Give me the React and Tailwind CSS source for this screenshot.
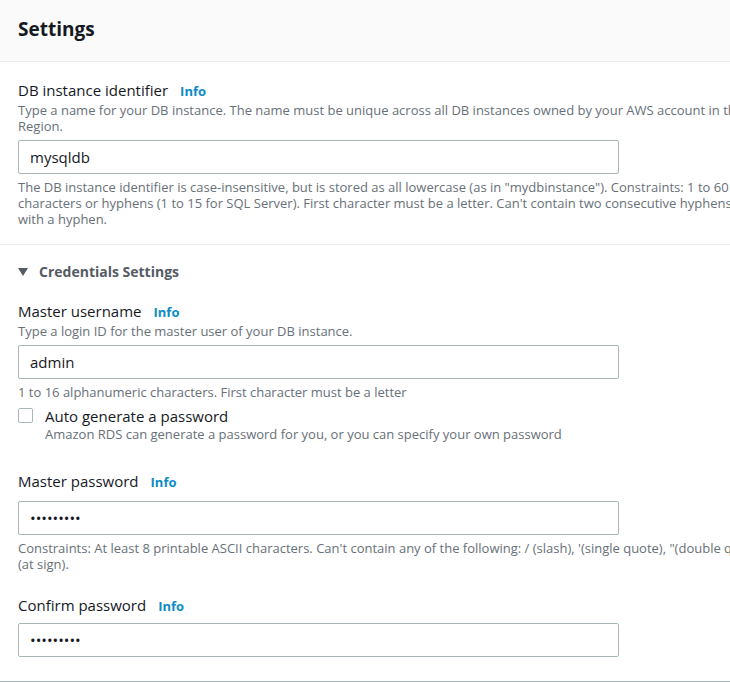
import { useState } from 'react'

const font = { fontFamily: '"Open Sans", "Liberation Sans", sans-serif' }

function Info() {
  return <span className="ml-3 text-[13px] font-bold text-[#0d8bc6]">Info</span>
}

function Label({ children }) {
  return (
    <div className="flex items-baseline text-[15px] leading-5 text-[#16191f]">
      {children}
      <Info />
    </div>
  )
}

function Hint({ lines, className = '' }) {
  return (
    <div className={`text-[13px] leading-4 text-[#687078] whitespace-nowrap ${className}`}>
      {lines.map((l) => (
        <div key={l}>{l}</div>
      ))}
    </div>
  )
}

function TextInput({ value, type = 'text' }) {
  const [v, setV] = useState(value)
  return (
    <input
      type={type}
      value={v}
      onChange={(e) => setV(e.target.value)}
      className="block w-[601px] h-[34px] rounded-[2px] border border-[#aab7b8] bg-white px-[11px] text-[15px] text-[#16191f] outline-none"
      style={font}
    />
  )
}

export default function App() {
  const [auto, setAuto] = useState(false)

  return (
    <div className="w-[730px] h-[682px] overflow-hidden bg-white" style={font}>
      <div className="w-[900px] border-b border-[#aab7b8]">
        {/* header */}
        <div className="h-[62px] bg-[#fafafa] border-b border-[#eaeded] px-[18px] flex items-center">
          <h2 className="text-[19px] font-bold text-[#16191f] pb-[3px]">Settings</h2>
        </div>

        {/* identifier */}
        <div className="px-[18px] pt-[18px] pb-[17px] border-b border-[#eaeded]">
          <Label>DB instance identifier</Label>
          <Hint
            className="mt-[1px]"
            lines={[
              'Type a name for your DB instance. The name must be unique across all DB instances owned by your AWS account in the current AWS',
              'Region.',
            ]}
          />
          <div className="mt-[6px]">
            <TextInput value="mysqldb" />
          </div>
          <Hint
            className="mt-[5px]"
            lines={[
              'The DB instance identifier is case-insensitive, but is stored as all lowercase (as in "mydbinstance"). Constraints: 1 to 60 alphanumeric',
              "characters or hyphens (1 to 15 for SQL Server). First character must be a letter. Can't contain two consecutive hyphens. Can't end",
              'with a hyphen.',
            ]}
          />
        </div>

        {/* credentials */}
        <div className="px-[18px] pt-[16px] pb-[24px]">
          <div className="flex items-center text-[14px] font-bold text-[#545b64]">
            <svg width="10" height="8" viewBox="0 0 10 8" className="mr-[11px]">
              <path d="M0 0h10L5 8z" fill="#545b64" />
            </svg>
            Credentials Settings
          </div>

          <div className="mt-[19px]">
            <Label>Master username</Label>
            <Hint className="mt-[1px]" lines={['Type a login ID for the master user of your DB instance.']} />
            <div className="mt-[6px]">
              <TextInput value="admin" />
            </div>
            <Hint className="mt-[5px]" lines={['1 to 16 alphanumeric characters. First character must be a letter']} />
          </div>

          <label className="mt-[6px] flex items-start cursor-pointer">
            <input
              type="checkbox"
              checked={auto}
              onChange={(e) => setAuto(e.target.checked)}
              className="mt-[2px] h-[15px] w-[15px] appearance-none rounded-[2px] border border-[#aab7b8] bg-white checked:bg-[#0073bb]"
            />
            <div className="ml-[12px]">
              <div className="text-[15px] leading-5 text-[#16191f]">Auto generate a password</div>
              <div className="text-[13px] leading-4 text-[#687078]">
                Amazon RDS can generate a password for you, or you can specify your own password
              </div>
            </div>
          </label>

          <div className="mt-[29px]">
            <Label>Master password</Label>
            <div className="mt-[9px]">
              <TextInput type="password" value="123456789" />
            </div>
            <Hint
              className="mt-[5px]"
              lines={[
                `Constraints: At least 8 printable ASCII characters. Can't contain any of the following: / (slash), '(single quote), "(double quote) and @`,
                '(at sign).',
              ]}
            />
          </div>

          <div className="mt-[23px]">
            <Label>Confirm password</Label>
            <div className="mt-[7px]">
              <TextInput type="password" value="123456789" />
            </div>
          </div>
        </div>
      </div>
    </div>
  )
}
